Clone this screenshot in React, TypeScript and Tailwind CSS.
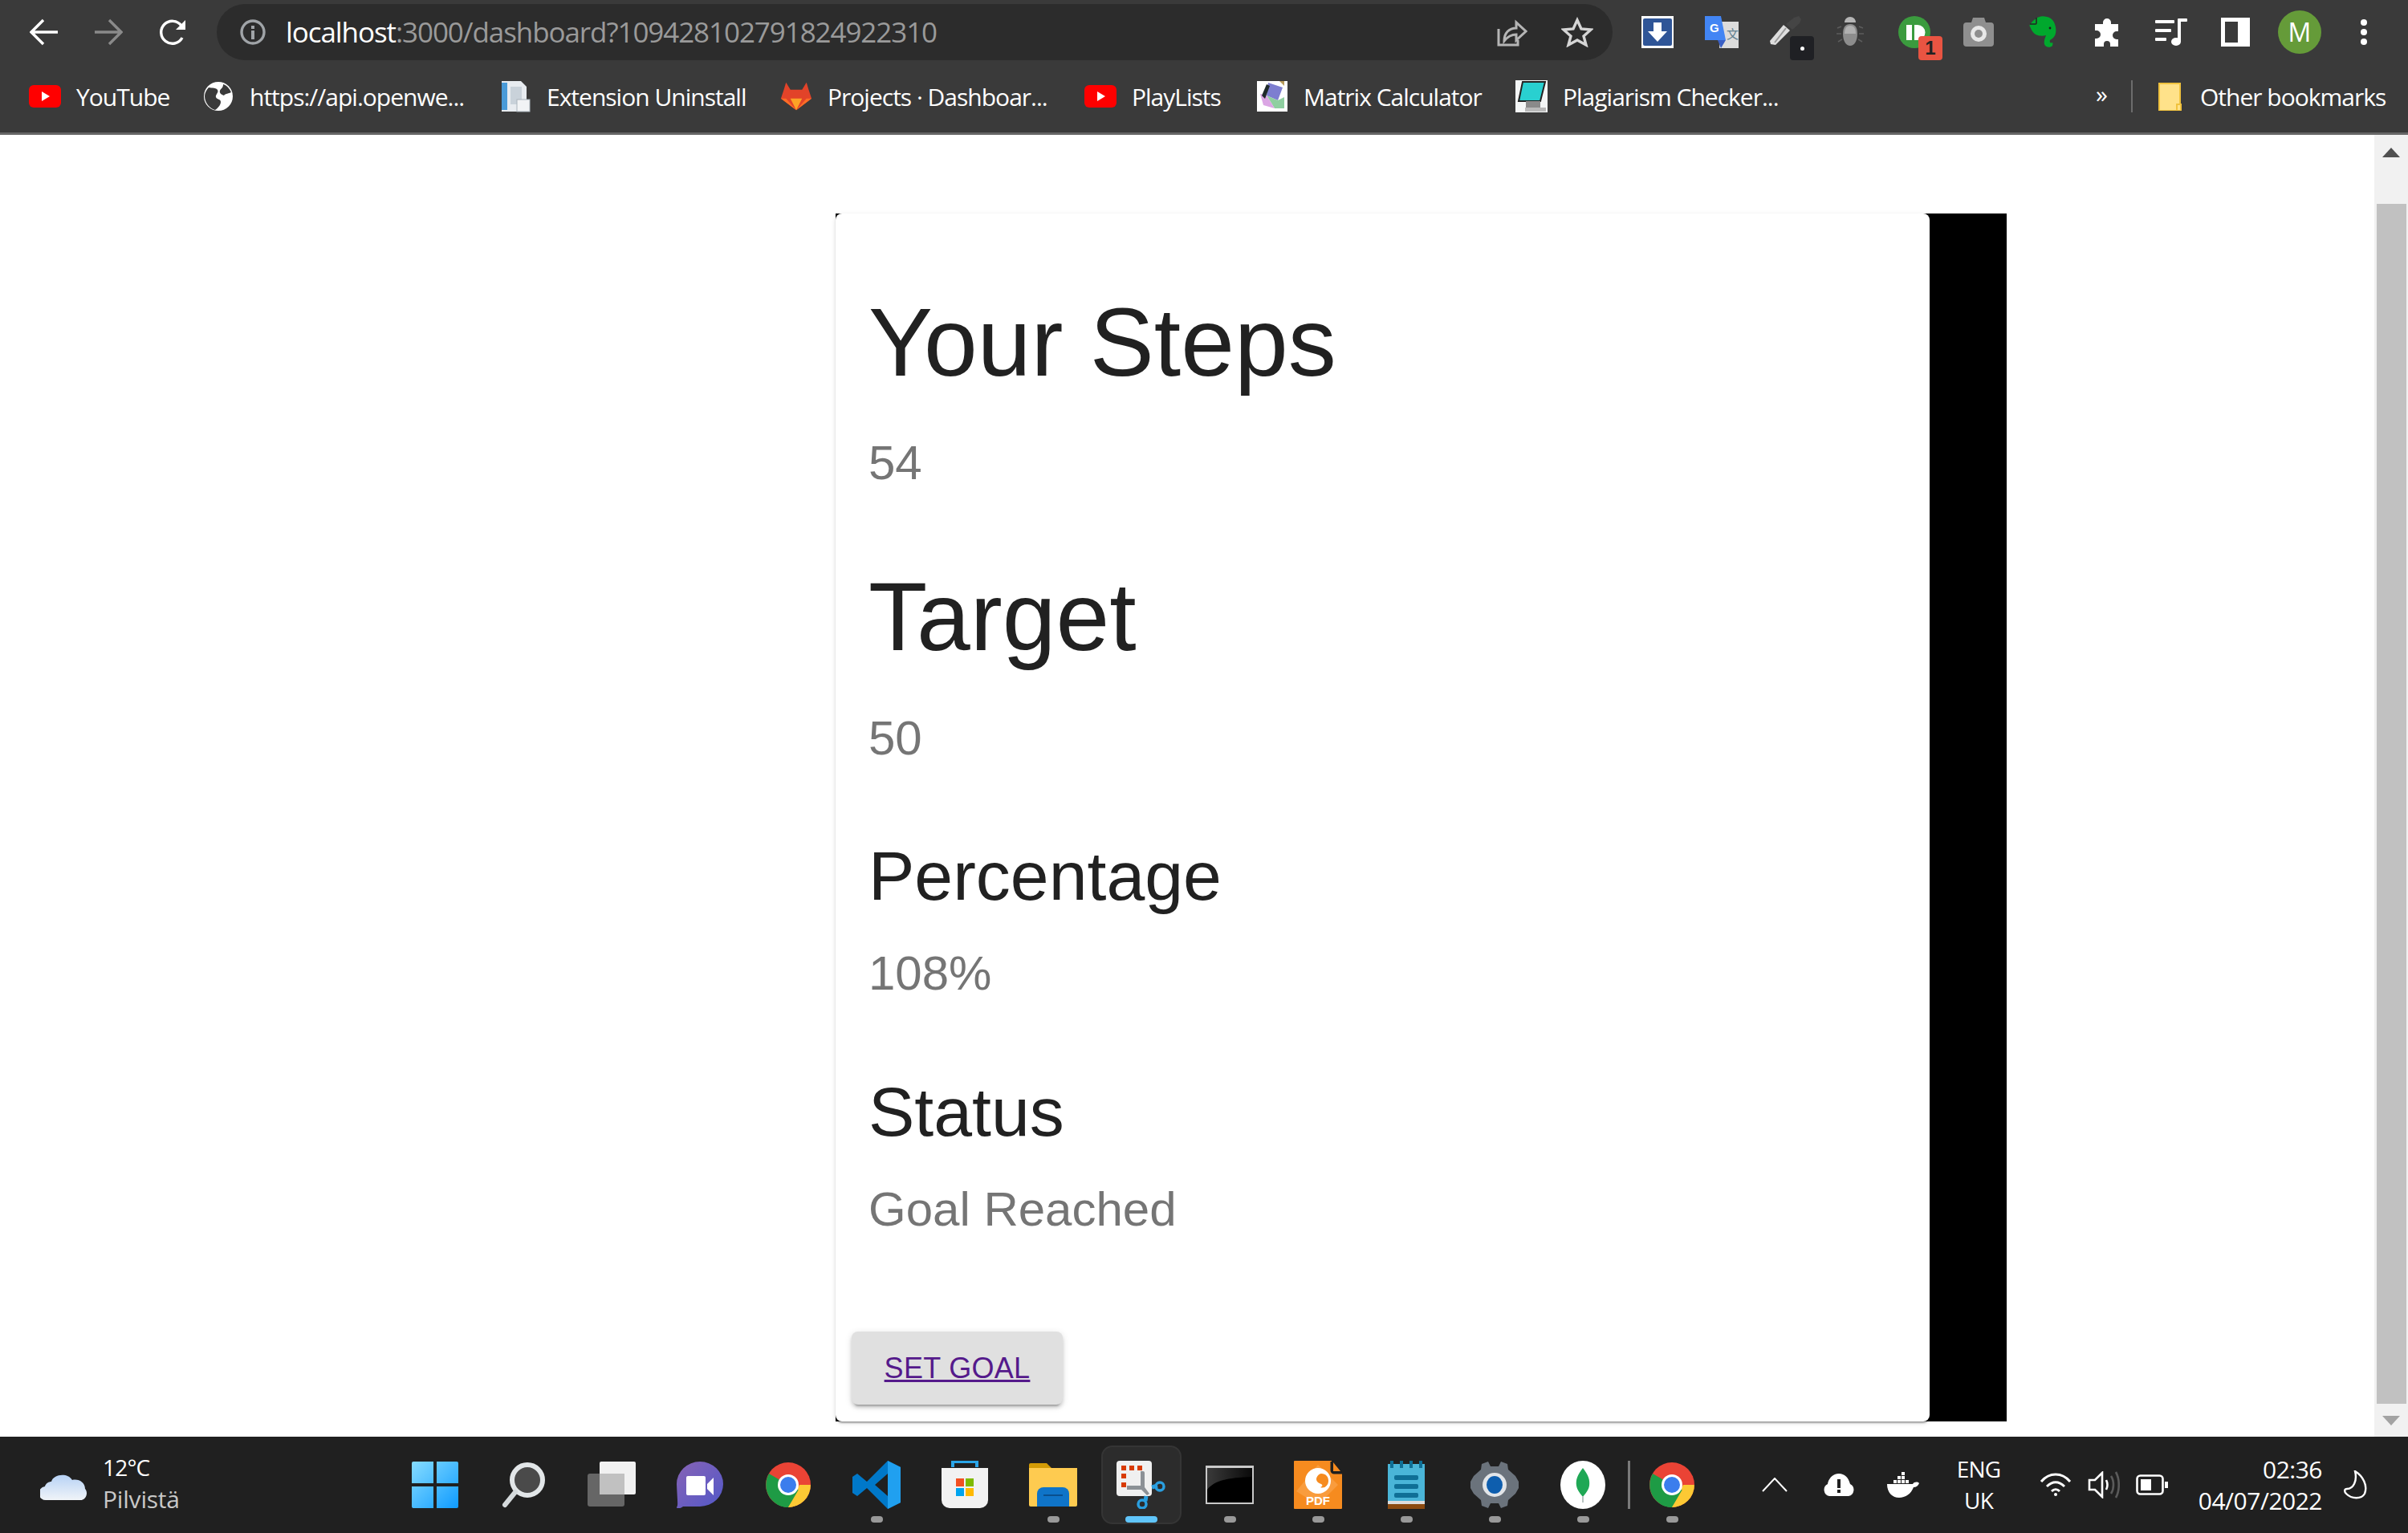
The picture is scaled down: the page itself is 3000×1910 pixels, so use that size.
import React from "react";

const chromeFont = "font-['Open_Sans',sans-serif]";

function YouTubeIcon() {
  return (
    <svg width="40" height="28" viewBox="0 0 40 28">
      <rect width="40" height="28" rx="6" fill="#f00" />
      <path d="M16 8l10 6-10 6z" fill="#fff" />
    </svg>
  );
}

function GlobeIcon() {
  return (
    <svg width="36" height="36" viewBox="0 0 36 36">
      <circle cx="18" cy="18" r="18" fill="#fff" />
      <path d="M6 7c5 1 9 0 11 3s-3 6-2 9 6 2 6 6-4 8-7 10C8 34 1 26 1 18 1 14 3 10 6 7zM24 3c4 1 8 5 10 10-3 2-7 1-9 4-3-1-6-3-5-6s4-3 4-8z" fill="#3a3a3a" />
    </svg>
  );
}

function DocIcon() {
  return (
    <svg width="40" height="40" viewBox="0 0 40 40">
      <path d="M3 1h24l7 7v31H3z" fill="#e8ecf0" />
      <rect x="3" y="3" width="7" height="34" fill="#4a9bd8" />
      <rect x="14" y="8" width="14" height="22" fill="#c9d2da" />
      <rect x="22" y="24" width="16" height="15" fill="#f1f3f5" stroke="#aab4bc" />
    </svg>
  );
}

function GitlabIcon() {
  return (
    <svg width="44" height="40" viewBox="0 0 44 40">
      <path d="M22 39L1 23l4-12 3-10 6 10h16l6-10 3 10 4 12z" fill="#e24329" />
      <path d="M22 39L8 23H1z" fill="#fc6d26" />
      <path d="M22 39l14-16h7z" fill="#fc6d26" />
      <path d="M22 39l-8-16h16z" fill="#fca326" />
    </svg>
  );
}

function MatrixIcon() {
  return (
    <svg width="38" height="38" viewBox="0 0 38 38">
      <rect width="38" height="38" fill="#fff" />
      <path d="M14 2l18 6-6 16-14-6z" fill="#7d7ed0" />
      <path d="M12 18l14 6 8-4v14H22z" fill="#8fcfa0" />
      <path d="M4 16l8 2 10 16-14-4z" fill="#dba6e4" />
      <path d="M12 4l4 2-6 16-4-4z" fill="#1f2a2a" />
      <path d="M28 0h6v6z" fill="#b79a5a" />
    </svg>
  );
}

function PlagIcon() {
  return (
    <svg width="40" height="40" viewBox="0 0 40 40">
      <rect width="40" height="40" fill="#f4f6f6" />
      <path d="M9 2h28l-6 24H4z" fill="#29d0d0" stroke="#222" strokeWidth="2" />
      <rect x="13" y="26" width="18" height="10" fill="#8a8a8a" />
      <rect x="12" y="34" width="26" height="5" fill="#b9b9b9" />
    </svg>
  );
}

function FolderIcon() {
  return (
    <svg width="30" height="36" viewBox="0 0 30 36">
      <path d="M1 2h26v34H1z" fill="#ffe28a" stroke="#f0c23e" strokeWidth="2" />
      <path d="M23 36v-8h5v8z" fill="#ffe28a" stroke="#f0c23e" strokeWidth="2" />
    </svg>
  );
}

function Bookmark({ icon, label, className }: { icon: React.ReactNode; label: string; className: string }) {
  return (
    <div className={`flex items-center shrink-0 ${className}`}>
      <div className="w-[40px] h-[40px] flex items-center justify-center shrink-0">{icon}</div>
      <span className="ml-[19px] text-[30px] tracking-[-1px] text-white whitespace-nowrap">{label}</span>
    </div>
  );
}

function ExtIcon({ children }: { children: React.ReactNode }) {
  return <div className="relative w-[80px] h-[80px] flex items-center justify-center shrink-0">{children}</div>;
}

function Toolbar() {
  return (
    <div className="h-[80px] flex items-center shrink-0">
      <div className="w-[15px]" />
      <div className="w-[80px] flex justify-center">
        <svg width="36" height="34" viewBox="0 0 36 34" fill="none" stroke="#fff" strokeWidth="3.4">
          <path d="M35 17H3M17 2L2 17l15 15" />
        </svg>
      </div>
      <div className="w-[80px] flex justify-center">
        <svg width="36" height="34" viewBox="0 0 36 34" fill="none" stroke="#8a8a8a" strokeWidth="3.4">
          <path d="M1 17h32M19 2l15 15-15 15" />
        </svg>
      </div>
      <div className="w-[80px] flex justify-center">
        <svg width="36" height="34" viewBox="0 0 36 34" fill="none" stroke="#fff" strokeWidth="3.4">
          <path d="M30 24a14 14 0 1 1-1-15" />
          <path d="M34 2v12H22z" fill="#fff" stroke="none" />
        </svg>
      </div>
      <div className="w-[15px]" />
      <div className="w-[1739px] h-[70px] rounded-full bg-[#2c2c2c] flex items-center pl-[28px] pr-[20px] shrink-0">
        <svg width="34" height="34" viewBox="0 0 34 34" fill="none" className="shrink-0">
          <circle cx="17" cy="17" r="14" stroke="#a0a4a8" strokeWidth="3.4" />
          <rect x="15" y="15" width="4" height="11" fill="#a0a4a8" />
          <rect x="15" y="9" width="4" height="4" fill="#a0a4a8" />
        </svg>
        <span className="ml-[24px] text-[35px] tracking-[-1.08px] whitespace-nowrap">
          <span className="text-white">localhost</span>
          <span className="text-[#9a9a9a]">:3000/dashboard?109428102791824922310</span>
        </span>
        <div className="ml-auto flex items-center gap-[42px] -translate-x-[4px]">
          <svg width="38" height="36" viewBox="0 0 38 36" fill="none" stroke="#b5b5b5" strokeWidth="3">
            <path d="M2 14v20h24v-6" />
            <path d="M9 29c0-10 6-16 15-16V6l12 11-12 11v-7c-7 0-11 3-15 8z" />
          </svg>
          <svg width="40" height="38" viewBox="0 0 40 38" fill="none" stroke="#d5d5d5" strokeWidth="3.4">
            <path d="M20 4l5 11 12 1-9 8 3 11-11-6-11 6 3-11-9-8 12-1z" />
          </svg>
        </div>
      </div>
      <div className="w-[16px]" />
      <ExtIcon>
        <svg width="40" height="40" viewBox="0 0 40 40">
          <rect width="40" height="40" fill="#fff" />
          <rect x="2" y="3" width="36" height="34" rx="2" fill="#2f5597" />
          <path d="M15 8h10v11h7L20 32 8 19h7z" fill="#fff" />
        </svg>
      </ExtIcon>
      <ExtIcon>
        <svg width="42" height="40" viewBox="0 0 42 40">
          <path d="M20 7h22v33H18z" fill="#dcdcdc" />
          <path d="M0 0h20l6 30H0z" fill="#4285f4" />
          <path d="M16 30h10l-6 10z" fill="#3a5fc4" />
          <text x="6" y="20" fontSize="15" fontWeight="700" fill="#fff" fontFamily="Liberation Sans">G</text>
          <text x="27" y="28" fontSize="15" fill="#5f7f8f" fontFamily="Noto Sans CJK SC">文</text>
        </svg>
      </ExtIcon>
      <ExtIcon>
        <svg width="40" height="36" viewBox="0 0 40 36" className="-translate-y-[2px]">
          <path d="M1 35l-1-4L17 11l8 7L7 36z" fill="#dedede" />
          <path d="M6 33L20 15" stroke="#9a9a9a" strokeWidth="2" />
          <path d="M20 10l10-8 6-2 3 4-2 5-9 8z" fill="#454545" />
        </svg>
        <div className="absolute left-[45px] top-[45px] w-[30px] h-[30px] rounded-[4px] bg-[#1f2024] flex items-center justify-center">
          <div className="w-[5px] h-[5px] rounded-full bg-white" />
        </div>
      </ExtIcon>
      <ExtIcon>
        <svg width="36" height="36" viewBox="0 0 36 36" className="-translate-y-[1px]">
          <path d="M18 0c4 0 7 3 7 7H11c0-4 3-7 7-7z" fill="#b5b5b5" />
          <path d="M18 9c6 0 9 4 9 12 0 9-4 15-9 15S9 30 9 21C9 13 12 9 18 9z" fill="#8d8d8d" />
          <path d="M18 11c5 0 7 4 7 10H11c0-6 2-10 7-10z" fill="#b0b0b0" />
          <path d="M7 12L2 14M29 12l5 2M7 21H1M29 21h6M8 28l-5 3M28 28l5 3" stroke="#5c5c5c" strokeWidth="1.5" />
        </svg>
      </ExtIcon>
      <ExtIcon>
        <svg width="40" height="40" viewBox="0 0 40 40">
          <circle cx="20" cy="20" r="20" fill="#3b9b3e" />
          <rect x="10" y="11" width="7" height="19" fill="#fff" />
          <path d="M20 11h4a9.5 9.5 0 0 1 0 19h-4z" fill="#fff" />
        </svg>
        <div className="absolute left-[45px] top-[45px] w-[30px] h-[30px] rounded-[4px] bg-[#e95442] flex items-center justify-center text-[24px] font-bold leading-none text-[#222] font-['Liberation_Sans',sans-serif]">
          1
        </div>
      </ExtIcon>
      <ExtIcon>
        <svg width="38" height="36" viewBox="0 0 38 36">
          <path d="M12 0h14l2 6h6a4 4 0 0 1 4 4v22a4 4 0 0 1-4 4H4a4 4 0 0 1-4-4V10a4 4 0 0 1 4-4h6z" fill="#8f8f8f" />
          <circle cx="19" cy="20" r="10" fill="#e8e8e8" />
          <circle cx="19" cy="20" r="5" fill="#8f8f8f" />
        </svg>
      </ExtIcon>
      <ExtIcon>
        <svg width="36" height="40" viewBox="0 0 36 40">
          <path d="M11 2c4-2 8-2 12-1 6 1 10 6 11 13 1 6 0 11-4 14l-3 2c-1 3 1 4 3 3 1 1 0 3 0 4-3 3-9 2-10-2-1-4 1-8 2-11-3 1-7 1-10 0-5-1-8-6-10-11C0 12 4 7 11 2z" fill="#00a82d" />
          <path d="M10 2v7a1 1 0 0 1-1 1H2" fill="none" stroke="#222" strokeWidth="1.5" />
          <circle cx="27" cy="15" r="1.4" fill="#1d1d1d" />
        </svg>
      </ExtIcon>
      <ExtIcon>
        <svg width="36" height="36" viewBox="0 0 36 36">
          <path d="M13 6a5 5 0 0 1 10 0h0v2h9v9h-2a5 5 0 0 0 0 10h2v9H22v-3a4 4 0 0 0-8 0v3H3V26h2a5 5 0 0 0 0-10H3V8h10z" fill="#fff" />
        </svg>
      </ExtIcon>
      <ExtIcon>
        <svg width="40" height="36" viewBox="0 0 40 36" fill="#fff">
          <rect x="0" y="3" width="24" height="4" rx="1" />
          <rect x="0" y="14" width="20" height="4" rx="1" />
          <rect x="0" y="25" width="14" height="4" rx="1" />
          <rect x="28" y="2" width="4" height="28" />
          <rect x="28" y="1" width="12" height="4" rx="1" />
          <ellipse cx="26" cy="30" rx="6" ry="5" />
        </svg>
      </ExtIcon>
      <ExtIcon>
        <svg width="36" height="36" viewBox="0 0 36 36">
          <path d="M0 0h36v36H0z M5 5v26h16V5z" fill="#fff" fillRule="evenodd" />
        </svg>
      </ExtIcon>
      <ExtIcon>
        <div className="w-[54px] h-[54px] rounded-full bg-[#659b39] flex items-center justify-center text-[32px] text-white font-['Open_Sans',sans-serif]">
          M
        </div>
      </ExtIcon>
      <ExtIcon>
        <svg width="8" height="32" viewBox="0 0 8 32" fill="#fff">
          <circle cx="4" cy="4" r="4" />
          <circle cx="4" cy="16" r="4" />
          <circle cx="4" cy="28" r="4" />
        </svg>
      </ExtIcon>
    </div>
  );
}

function BookmarksBar() {
  return (
    <div className="h-[85px] flex items-center pl-[36px] pb-[5px] shrink-0">
      <Bookmark icon={<YouTubeIcon />} label="YouTube" className="w-[216px]" />
      <Bookmark icon={<GlobeIcon />} label="https://api.openwe..." className="w-[370px]" />
      <Bookmark icon={<DocIcon />} label="Extension Uninstall" className="w-[350px]" />
      <Bookmark icon={<GitlabIcon />} label="Projects · Dashboar..." className="w-[379px]" />
      <Bookmark icon={<YouTubeIcon />} label="PlayLists" className="w-[214px]" />
      <Bookmark icon={<MatrixIcon />} label="Matrix Calculator" className="w-[323px]" />
      <Bookmark icon={<PlagIcon />} label="Plagiarism Checker..." className="w-[723px]" />
      <span className="text-[30px] leading-none text-white -translate-y-[3px] w-[44px]">»</span>
      <div className="w-[2px] h-[40px] bg-[#6c6c6c]" />
      <div className="ml-[32px] w-[30px] flex shrink-0">
        <FolderIcon />
      </div>
      <span className="ml-[22px] text-[30px] tracking-[-1px] text-white whitespace-nowrap">Other bookmarks</span>
    </div>
  );
}

function Scrollbar() {
  return (
    <div className="w-[42px] h-full bg-[#f1f1f1] flex flex-col items-center shrink-0">
      <div className="h-[44px] flex items-center justify-center shrink-0">
        <svg width="22" height="12" viewBox="0 0 22 12"><path d="M11 0l11 12H0z" fill="#505050" /></svg>
      </div>
      <div className="h-[42px] shrink-0" />
      <div className="flex-1 w-[37px] bg-[#c1c1c1]" />
      <div className="h-[41px] flex items-center justify-center shrink-0">
        <svg width="22" height="12" viewBox="0 0 22 12"><path d="M0 0h22L11 12z" fill="#a3a3a3" /></svg>
      </div>
    </div>
  );
}

function Dashboard() {
  return (
    <div className="flex-1 bg-white pl-[1041px] pt-[98px]">
      <div className="w-[1459px] h-[1505px] bg-black">
        <div className="w-[1363px] h-full bg-white rounded-lg shadow-[0_4px_2px_-2px_rgba(0,0,0,0.2),0_2px_2px_0_rgba(0,0,0,0.14),0_2px_6px_0_rgba(0,0,0,0.12)] pt-[88px] pl-[41px] pr-[40px] font-['Liberation_Sans',sans-serif] flex flex-col">
          <h2 className="text-[120px] leading-[144px] text-[#212121]">Your Steps</h2>
          <p className="mt-[39px] text-[60px] leading-[80px] text-[#757575]">54</p>
          <h2 className="mt-[79px] text-[120px] leading-[144px] text-[#212121]">Target</h2>
          <p className="mt-[40px] text-[60px] leading-[80px] text-[#757575]">50</p>
          <h3 className="mt-[79px] text-[86px] leading-[105px] text-[#212121]">Percentage</h3>
          <p className="mt-[29px] text-[60px] leading-[80px] text-[#757575]">108%</p>
          <h3 className="mt-[80px] text-[86px] leading-[105px] text-[#212121]">Status</h3>
          <p className="mt-[29px] text-[60px] leading-[80px] text-[#757575]">Goal Reached</p>
          <a
            href="#"
            className="mt-[112px] -ml-[21px] w-[263px] h-[91px] rounded-lg bg-[#e0e0e0] shadow-[0_6px_2px_-4px_rgba(0,0,0,0.2),0_4px_4px_0_rgba(0,0,0,0.14),0_2px_10px_0_rgba(0,0,0,0.12)] flex items-center justify-center text-[36px] tracking-[0.3px] text-[#551a8b] underline"
          >
            SET GOAL
          </a>
        </div>
      </div>
    </div>
  );
}

function ChromeLogo() {
  return (
    <svg width="56" height="56" viewBox="0 0 56 56">
      <circle cx="28" cy="28" r="28" fill="#ea4335" />
      <path d="M28 28L4 14A28 28 0 0 0 28 56z" fill="#1e9b45" />
      <path d="M28 28h27a28 28 0 0 1-27 28l14-28z" fill="#fcc934" />
      <path d="M28 56A28 28 0 0 1 14 52l14-24 14 7z" fill="#1e9b45" />
      <path d="M28 56l14-24 14-4a28 28 0 0 1-28 28z" fill="#fcc934" />
      <circle cx="28" cy="28" r="13" fill="#fff" />
      <circle cx="28" cy="28" r="10" fill="#3b7ded" />
    </svg>
  );
}

function TaskIcon({ children, dot }: { children: React.ReactNode; dot?: boolean }) {
  return (
    <div className="relative w-[110px] h-full flex items-center justify-center shrink-0">
      {children}
      {dot && <div className="absolute bottom-[13px] w-[15px] h-[8px] rounded-full bg-[#999]" />}
    </div>
  );
}

function Taskbar() {
  return (
    <div className={`h-[120px] bg-[#202020] flex items-center shrink-0 ${chromeFont}`}>
      <div className="w-[487px] h-full flex items-center pl-[50px] shrink-0">
        <svg width="60" height="40" viewBox="0 0 60 40">
          <defs>
            <linearGradient id="cloud" x1="0" y1="0" x2="0" y2="1">
              <stop offset="0" stopColor="#b7d2f5" />
              <stop offset="1" stopColor="#f0f4f8" />
            </linearGradient>
          </defs>
          <path d="M8 39a8 8 0 0 1-2-17c1-4 5-6 8-6 2-9 20-12 26-2 8-2 16 3 16 11 4 4 2 14-6 14z" fill="url(#cloud)" />
        </svg>
        <div className="ml-[18px] flex flex-col text-[28px] leading-[40px] tracking-[-0.8px] -translate-y-[2px]">
          <span className="text-white">12°C</span>
          <span className="text-[30px] tracking-[-0.2px] text-[#c8c8c8]">Pilvistä</span>
        </div>
      </div>
      <TaskIcon>
        <svg width="58" height="58" viewBox="0 0 58 58">
          <defs>
            <linearGradient id="win" x1="0" y1="0" x2="1" y2="1">
              <stop offset="0" stopColor="#86dcff" />
              <stop offset="1" stopColor="#0f9bff" />
            </linearGradient>
          </defs>
          <path d="M0 2a2 2 0 0 1 2-2h25v27H0zM31 0h25a2 2 0 0 1 2 2v25H31zM0 31h27v27H2a2 2 0 0 1-2-2zM31 31h27v25a2 2 0 0 1-2 2H31z" fill="url(#win)" />
        </svg>
      </TaskIcon>
      <TaskIcon>
        <svg width="54" height="58" viewBox="0 0 54 58">
          <circle cx="32" cy="23" r="19" fill="#4a4a4a" stroke="#e2e6e8" strokeWidth="6" />
          <path d="M17 38L4 54" stroke="#d5dadc" strokeWidth="6" strokeLinecap="round" />
        </svg>
      </TaskIcon>
      <TaskIcon>
        <svg width="60" height="58" viewBox="0 0 60 58">
          <rect x="15" y="0" width="45" height="41" rx="2" fill="#f1f1f1" />
          <rect x="0" y="15" width="46" height="41" rx="3" fill="#666" />
          <rect x="15" y="15" width="31" height="26" fill="#c1c1c1" />
        </svg>
      </TaskIcon>
      <TaskIcon>
        <svg width="58" height="58" viewBox="0 0 58 58">
          <defs>
            <linearGradient id="teams" x1="0" y1="0" x2="1" y2="1">
              <stop offset="0" stopColor="#8763b5" />
              <stop offset="1" stopColor="#5258c9" />
            </linearGradient>
          </defs>
          <path d="M29 0a29 28 0 0 1 0 56H8c-4 3-8 3-8 1 2-3 1-6 0-29A29 28 0 0 1 29 0z" fill="url(#teams)" />
          <rect x="12" y="18" width="24" height="24" rx="2" fill="#fff" />
          <path d="M38 28l8-8v22l-8-8z" fill="#fff" />
        </svg>
      </TaskIcon>
      <TaskIcon>
        <ChromeLogo />
      </TaskIcon>
      <TaskIcon dot>
        <svg width="60" height="60" viewBox="0 0 60 60">
          <path d="M44 0l16 8v44l-16 8L18 34 6 44 0 40V20l6-4 12 10zM44 16L28 30l16 14z" fill="#0078c9" />
          <path d="M44 0l16 8v44l-16 8z" fill="#20a0f0" />
        </svg>
      </TaskIcon>
      <TaskIcon>
        <svg width="58" height="60" viewBox="0 0 58 60">
          <path d="M14 8V1h30v7" fill="none" stroke="#2aa5e8" strokeWidth="4" />
          <path d="M0 9h58v40a10 10 0 0 1-10 10H10A10 10 0 0 1 0 49z" fill="#f2f2f2" />
          <rect x="18" y="22" width="10" height="10" fill="#f25022" />
          <rect x="30" y="22" width="10" height="10" fill="#7fba00" />
          <rect x="18" y="34" width="10" height="10" fill="#00a4ef" />
          <rect x="30" y="34" width="10" height="10" fill="#ffb900" />
        </svg>
      </TaskIcon>
      <TaskIcon dot>
        <svg width="60" height="54" viewBox="0 0 60 54">
          <path d="M0 2a2 2 0 0 1 2-2h20l6 6h32v10H0z" fill="#d39b06" />
          <path d="M0 6h60v46a2 2 0 0 1-2 2H2a2 2 0 0 1-2-2z" fill="#fecb50" />
          <path d="M10 54V38a8 8 0 0 1 8-8h24a8 8 0 0 1 8 8v16z" fill="#0f74c8" />
          <rect x="18" y="39" width="24" height="2" fill="#094f8e" />
        </svg>
      </TaskIcon>
      <div className="relative w-[110px] h-full flex items-center justify-center shrink-0">
        <div className="absolute inset-y-[11px] inset-x-[5px] rounded-[14px] bg-[#2c2c2c] border-2 border-[#353535]" />
        <svg width="62" height="60" viewBox="0 0 62 60" className="relative">
          <rect x="0" y="0" width="44" height="44" rx="4" fill="#f0f0f0" />
          <path d="M6 6h6v6H6zM16 6h6v6h-6zM26 6h6v6h-6zM6 16h6v6H6zM6 27h6v6H6z" fill="#d83b01" />
          <path d="M30 13h3a2 2 0 0 1 2 2v18l6 8-3 2-7-7H13v-5h17z" fill="#8c9196" />
          <path d="M44 33l7-2" stroke="#2a9fe0" strokeWidth="5" />
          <circle cx="54" cy="32" r="5" fill="none" stroke="#2a9fe0" strokeWidth="3.5" />
          <path d="M37 44l-1 6" stroke="#2a9fe0" strokeWidth="5" />
          <circle cx="32" cy="54" r="5" fill="none" stroke="#2a9fe0" strokeWidth="3.5" />
        </svg>
        <div className="absolute bottom-[13px] w-[40px] h-[8px] rounded-full bg-[#60c5fa]" />
      </div>
      <TaskIcon dot>
        <svg width="60" height="48" viewBox="0 0 60 48">
          <defs>
            <linearGradient id="term" x1="0" y1="0" x2="1" y2="0">
              <stop offset="0" stopColor="#3a3a3a" />
              <stop offset="1" stopColor="#0a0a0a" />
            </linearGradient>
          </defs>
          <rect width="60" height="48" fill="#c9c9c9" />
          <rect x="2" y="3" width="56" height="43" fill="#000" />
          <path d="M2 30C10 20 24 15 58 14V3H2z" fill="url(#term)" />
        </svg>
      </TaskIcon>
      <TaskIcon dot>
        <svg width="60" height="60" viewBox="0 0 60 60">
          <path d="M0 1a1 1 0 0 1 1-1h46v14h13v45a1 1 0 0 1-1 1H1a1 1 0 0 1-1-1z" fill="#f68b1f" />
          <path d="M30 5l25 25-25 25L3 38z" fill="#fbab55" fillOpacity="0.55" />
          <path d="M47 1v11a3 3 0 0 0 3 3h10" fill="none" stroke="#1f1f1f" strokeWidth="3" />
          <path d="M49 2l9 11h-9z" fill="#f68b1f" />
          <circle cx="30" cy="25" r="16" fill="#fff" />
          <path d="M34 16c6 0 9 4 9 9 0 6-5 10-10 8 3-1 3-3 1-4-3-1-6-3-6-6s3-7 6-7z" fill="#f68b1f" />
          <text x="30" y="55" fontSize="15" fontWeight="700" fill="#fff" textAnchor="middle" fontFamily="Liberation Sans">PDF</text>
        </svg>
      </TaskIcon>
      <TaskIcon dot>
        <svg width="46" height="60" viewBox="0 0 46 60">
          <rect y="4" width="46" height="56" fill="#4ab5d8" />
          <rect y="50" width="46" height="4" fill="#ddd" />
          <rect y="54" width="46" height="6" fill="#8b4a10" />
          <path d="M3 0h4v9H3zM15 0h4v9h-4zM27 0h4v9h-4zM39 0h4v9h-4z" fill="#0f6f96" />
          <rect x="8" y="18" width="30" height="6" rx="2" fill="#0f6f96" />
          <rect x="8" y="29" width="30" height="6" rx="2" fill="#0f6f96" />
          <rect x="8" y="40" width="30" height="6" rx="2" fill="#0f6f96" />
        </svg>
      </TaskIcon>
      <TaskIcon dot>
        <svg width="60" height="58" viewBox="0 0 60 58">
          <path d="M14 3l8-3 3 6h10l3-6 8 3 1 7 9 8 4 7v8l-4 7-9 8-1 7-8 3-3-6H25l-3 6-8-3-1-7-9-8-4-7v-8l4-7 9-8z" fill="#6b737c" />
          <circle cx="30" cy="29" r="15" fill="#e2e5e8" />
          <ellipse cx="30" cy="29" rx="10" ry="11" fill="#0e5eae" />
        </svg>
      </TaskIcon>
      <TaskIcon dot>
        <svg width="56" height="60" viewBox="0 0 56 60">
          <ellipse cx="28" cy="30" rx="28" ry="30" fill="#fff" />
          <path d="M28 9c7 9 9 15 8 22-1 6-5 10-8 14-3-4-7-8-8-14-1-7 1-13 8-22z" fill="#1fa855" />
          <rect x="27" y="44" width="2" height="8" fill="#b8c4c2" />
        </svg>
      </TaskIcon>
      <div className="w-[3px] h-[60px] bg-[#7a7a7a] ml-[1px] shrink-0" />
      <div className="relative w-[104px] h-full flex items-center justify-center shrink-0">
        <ChromeLogo />
        <div className="absolute bottom-[13px] w-[15px] h-[8px] rounded-full bg-[#999]" />
      </div>
      <svg width="32" height="18" viewBox="0 0 32 18" fill="none" stroke="#fff" strokeWidth="2" className="ml-[60px] shrink-0">
        <path d="M1 17L16 1l15 16" />
      </svg>
      <svg width="40" height="28" viewBox="0 0 40 28" className="ml-[44px] shrink-0">
        <path d="M8 28a8 8 0 0 1-2-15C7 6 13 0 20 0s12 5 14 13a8 8 0 0 1-2 15z" fill="#fff" />
        <rect x="18" y="7" width="4" height="11" fill="#202020" />
        <rect x="18" y="20" width="4" height="4" fill="#202020" />
      </svg>
      <svg width="40" height="32" viewBox="0 0 40 32" className="ml-[40px] shrink-0">
        <path d="M0 15h32c2-3 6-3 8-1-1 3-4 5-7 5-3 8-10 13-18 13-8 0-15-6-15-17z" fill="#fff" />
        <path d="M8 10h4v4H8zM13 10h4v4h-4zM18 10h4v4h-4zM23 10h4v4h-4zM13 5h4v4h-4zM18 5h4v4h-4zM18 0h4v4h-4z" fill="#fff" />
      </svg>
      <div className="ml-[38px] w-[72px] flex flex-col items-center text-[28px] leading-[39px] tracking-[-0.8px] text-white shrink-0">
        <span>ENG</span>
        <span>UK</span>
      </div>
      <svg width="40" height="30" viewBox="0 0 40 30" fill="none" stroke="#fff" strokeWidth="3" className="ml-[40px] shrink-0">
        <path d="M2 11c10-12 26-12 36 0M9 17c7-7 15-7 22 0M15 23c3-3 7-3 10 0" />
        <circle cx="20" cy="27" r="2" fill="#fff" stroke="none" />
      </svg>
      <svg width="40" height="34" viewBox="0 0 40 34" fill="none" stroke="#fff" strokeWidth="2.6" className="ml-[20px] shrink-0">
        <path d="M2 11h7l9-9v30l-9-9H2z" />
        <path d="M23 11c2 4 2 8 0 12" />
        <path d="M29 6c4 6 4 16 0 22M35 1c5 9 5 23 0 32" stroke="#5a5a5a" />
      </svg>
      <svg width="40" height="26" viewBox="0 0 40 26" className="ml-[20px] shrink-0">
        <rect x="1.5" y="1.5" width="32" height="23" rx="4" fill="none" stroke="#fff" strokeWidth="2.6" />
        <rect x="6" y="6" width="13" height="14" fill="#fff" />
        <rect x="36" y="9" width="4" height="8" fill="#fff" />
      </svg>
      <div className="w-[192px] flex flex-col items-end text-[30px] leading-[39px] tracking-[-0.5px] text-white shrink-0">
        <span>02:36</span>
        <span>04/07/2022</span>
      </div>
      <svg width="31" height="36" viewBox="0 0 31 36" fill="none" stroke="#fff" strokeWidth="2.4" className="ml-[25px] shrink-0">
        <path d="M16 1c10 6 16 18 12 28-4 7-16 7-23 0-3-3-2-6 1-6 8 0 13-10 10-22z" />
      </svg>
    </div>
  );
}

export default function App() {
  return (
    <div className="w-[3000px] h-[1910px] flex flex-col overflow-hidden bg-white">
      <div className={`bg-[#3a3a3a] border-b-[3px] border-[#666] shrink-0 ${chromeFont}`}>
        <Toolbar />
        <BookmarksBar />
      </div>
      <div className="flex flex-1 min-h-0">
        <Dashboard />
        <Scrollbar />
      </div>
      <Taskbar />
    </div>
  );
}
